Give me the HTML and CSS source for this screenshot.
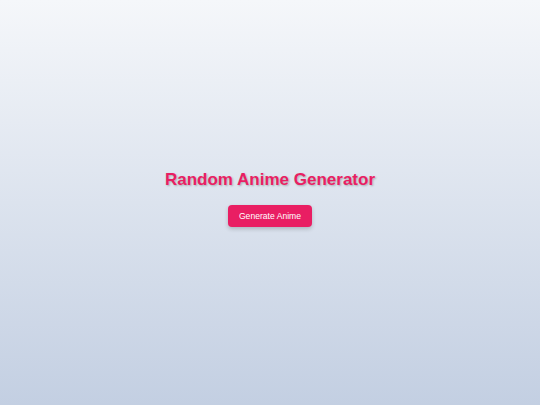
FILE: index.html
```html
<!DOCTYPE html>
<html lang="en">
<head>
<meta charset="utf-8">
<title>Random Anime Generator</title>
<link rel="stylesheet" href="styles.css">
</head>
<body>
<main class="app">
  <h1 class="app-title">Random Anime Generator</h1>
  <button class="generate-btn" type="button">Generate Anime</button>
</main>
</body>
</html>
```

FILE: styles.css
```css
* { box-sizing: border-box; }

html, body {
  margin: 0;
  height: 100%;
}

body {
  font-family: "Liberation Sans", Arial, sans-serif;
  background: linear-gradient(to bottom, #f5f7fa 0%, #c3cfe2 100%);
}

.app {
  min-height: 100%;
  display: flex;
  flex-direction: column;
  align-items: center;
  justify-content: center;
  gap: 15px;
  padding-top: 2px;
  padding-bottom: 10px;
}

.app-title {
  margin: 0;
  font-size: 17px;
  font-weight: bold;
  color: #e91e63;
  text-shadow: 1px 1px 2px rgba(0, 0, 0, 0.25);
}

.generate-btn {
  font-family: inherit;
  font-size: 8.6px;
  color: #fff;
  background: #e91e63;
  border: none;
  border-radius: 4px;
  height: 22px;
  padding: 0 11px;
  box-shadow: 0 2px 4px rgba(0, 0, 0, 0.2);
  cursor: pointer;
}
```
